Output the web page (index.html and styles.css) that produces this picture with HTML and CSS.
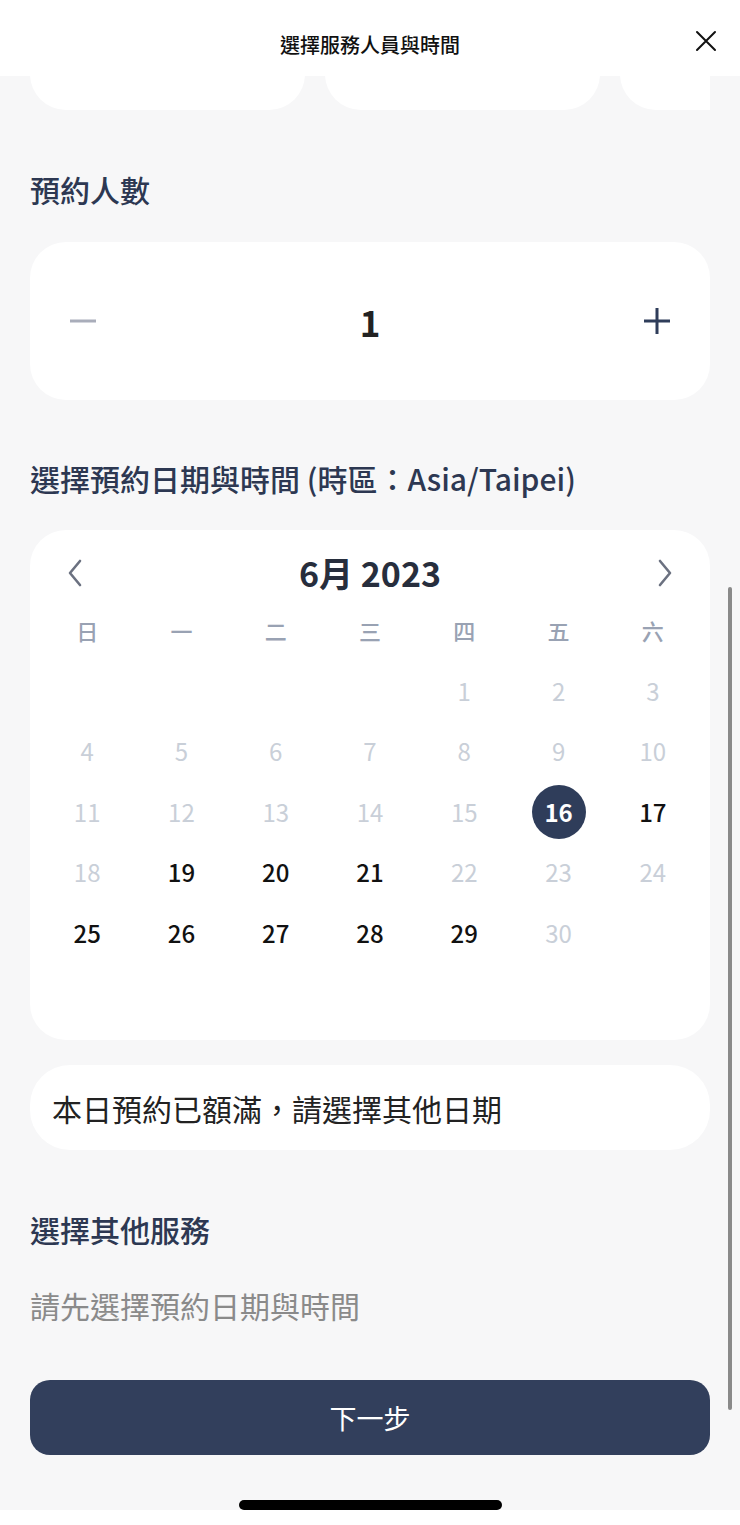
FILE: index.html
```html
<!DOCTYPE html>
<html lang="zh-Hant">
<head>
<meta charset="utf-8">
<title>選擇服務人員與時間</title>
<link rel="stylesheet" href="styles.css">
</head>
<body>
<div class="page">
  <header class="topbar">
    <h1 class="topbar-title">選擇服務人員與時間</h1>
    <button class="close-btn" aria-label="關閉">
      <svg width="22" height="22" viewBox="0 0 22 22"><path d="M2 2 L20 20 M20 2 L2 20" stroke="#111" stroke-width="2" stroke-linecap="round" fill="none"/></svg>
    </button>
  </header>

  <main class="content">
    <div class="strip">
      <div class="strip-card"></div>
      <div class="strip-card"></div>
      <div class="strip-card"></div>
    </div>

    <h2 class="section-title first">預約人數</h2>
    <div class="counter card">
      <button class="counter-btn minus" aria-label="減少">
        <svg width="30" height="30" viewBox="0 0 30 30"><path d="M2 15 H28" stroke="#a9adba" stroke-width="3" fill="none"/></svg>
      </button>
      <span class="counter-value">1</span>
      <button class="counter-btn plus" aria-label="增加">
        <svg width="30" height="30" viewBox="0 0 30 30"><path d="M2 15 H28 M15 2 V28" stroke="#2f3d5a" stroke-width="3" fill="none"/></svg>
      </button>
    </div>

    <h2 class="section-title second">選擇預約日期與時間 (時區：Asia/Taipei)</h2>
    <div class="calendar card">
      <div class="cal-head">
        <svg class="arrow" width="20" height="28" viewBox="0 0 20 28"><path d="M15 2 L5 14 L15 26" stroke="#6b7180" stroke-width="2.6" fill="none" stroke-linecap="round" stroke-linejoin="round"/></svg>
        <span class="cal-title">6月 2023</span>
        <svg class="arrow" width="20" height="28" viewBox="0 0 20 28"><path d="M5 2 L15 14 L5 26" stroke="#6b7180" stroke-width="2.6" fill="none" stroke-linecap="round" stroke-linejoin="round"/></svg>
      </div>
      <div class="cal-grid">
        <span class="wd">日</span><span class="wd">一</span><span class="wd">二</span><span class="wd">三</span><span class="wd">四</span><span class="wd">五</span><span class="wd">六</span>
        <span></span><span></span><span></span><span></span>
        <span class="d off">1</span><span class="d off">2</span><span class="d off">3</span>
        <span class="d off">4</span><span class="d off">5</span><span class="d off">6</span><span class="d off">7</span><span class="d off">8</span><span class="d off">9</span><span class="d off">10</span>
        <span class="d off">11</span><span class="d off">12</span><span class="d off">13</span><span class="d off">14</span><span class="d off">15</span><span class="d sel"><span class="dot">16</span></span><span class="d on">17</span>
        <span class="d off">18</span><span class="d on">19</span><span class="d on">20</span><span class="d on">21</span><span class="d off">22</span><span class="d off">23</span><span class="d off">24</span>
        <span class="d on">25</span><span class="d on">26</span><span class="d on">27</span><span class="d on">28</span><span class="d on">29</span><span class="d off">30</span><span></span>
      </div>
    </div>

    <div class="notice card">本日預約已額滿，請選擇其他日期</div>

    <h2 class="section-title third">選擇其他服務</h2>
    <p class="hint">請先選擇預約日期與時間</p>

    <button class="next-btn">下一步</button>
  </main>

  <div class="bottom-bar"></div>
  <div class="scrollbar"></div>
  <div class="home-indicator"></div>
</div>
</body>
</html>
```

FILE: styles.css
```css
* { box-sizing: border-box; }
html, body { margin: 0; padding: 0; }
body {
  width: 740px;
  height: 1525px;
  overflow: hidden;
  background: #f7f7f8;
  font-family: "Noto Sans CJK TC", "Noto Sans", sans-serif;
}
.page {
  position: relative;
  height: 1525px;
  display: flex;
  flex-direction: column;
}
.topbar {
  height: 76px;
  background: #fff;
  display: flex;
  align-items: center;
  justify-content: center;
  position: relative;
  z-index: 2;
}
.topbar-title {
  margin: 0;
  margin-top: 12px;
  font-size: 20px;
  font-weight: 500;
  color: #111;
}
.close-btn {
  position: absolute;
  right: 23px;
  top: 30px;
  padding: 0;
  border: 0;
  background: none;
  width: 22px;
  height: 22px;
  display: flex;
}
.content {
  flex: 1;
  padding: 0 30px;
  display: flex;
  flex-direction: column;
}
.strip {
  height: 34px;
  overflow: hidden;
  display: flex;
  gap: 20px;
}
.strip-card {
  flex: 0 0 275px;
  height: 120px;
  margin-top: -86px;
  background: #fff;
  border-radius: 36px;
}
.card {
  background: #fff;
  border-radius: 36px;
}
.section-title {
  margin: 0;
  font-size: 30px;
  line-height: 36px;
  font-weight: 500;
  color: #2d3852;
}
.section-title.first { margin-top: 61px; }
.counter {
  margin-top: 35px;
  height: 158px;
  display: flex;
  align-items: center;
  justify-content: space-between;
  padding: 0 38px 0 38px;
}
.counter-btn {
  border: 0;
  background: none;
  padding: 0;
  display: flex;
}
.counter-value {
  font-size: 35px;
  font-weight: 700;
  color: #222;
  line-height: 1;
}
.section-title.second { margin-top: 60px; }
.calendar {
  margin-top: 34px;
  height: 510px;
  padding: 17px 10px 0;
}
.cal-head {
  height: 52px;
  display: flex;
  align-items: center;
  justify-content: space-between;
  padding: 0 25px 0 25px;
}
.cal-title {
  font-size: 34px;
  font-weight: 700;
  color: #272e3d;
  line-height: 1;
}
.cal-grid {
  margin-top: 1px;
  display: grid;
  grid-template-columns: repeat(7, 1fr);
  grid-auto-rows: 60.5px;
  align-items: center;
  justify-items: center;
}
.wd {
  font-size: 22px;
  font-weight: 500;
  color: #99a2b3;
}
.d {
  font-size: 24px;
  line-height: 1;
  font-weight: 500;
}
.d.off { color: #c9cfd8; font-weight: 400; }
.d.on { color: #111; }
.dot {
  width: 54px;
  height: 54px;
  border-radius: 50%;
  background: #2f3d5a;
  color: #fff;
  font-weight: 700;
  display: flex;
  align-items: center;
  justify-content: center;
}
.notice {
  margin-top: 25px;
  height: 85px;
  border-radius: 40px;
  display: flex;
  align-items: center;
  padding-left: 22px;
  font-size: 30px;
  color: #222;
}
.section-title.third { margin-top: 61px; }
.hint {
  margin: 40px 0 0;
  font-size: 30px;
  line-height: 36px;
  color: #8a8a8a;
}
.next-btn {
  margin-top: 57px;
  height: 75px;
  border: 0;
  border-radius: 20px;
  background: #323f5c;
  color: #fff;
  font-family: inherit;
  font-size: 27px;
}
.bottom-bar {
  height: 15px;
  background: #fff;
}
.scrollbar {
  position: absolute;
  left: 728px;
  top: 587px;
  width: 4px;
  height: 823px;
  border-radius: 2px;
  background: #8a8a8a;
}
.home-indicator {
  position: absolute;
  left: 239px;
  top: 1500px;
  width: 263px;
  height: 10px;
  border-radius: 5px;
  background: #000;
}
```
